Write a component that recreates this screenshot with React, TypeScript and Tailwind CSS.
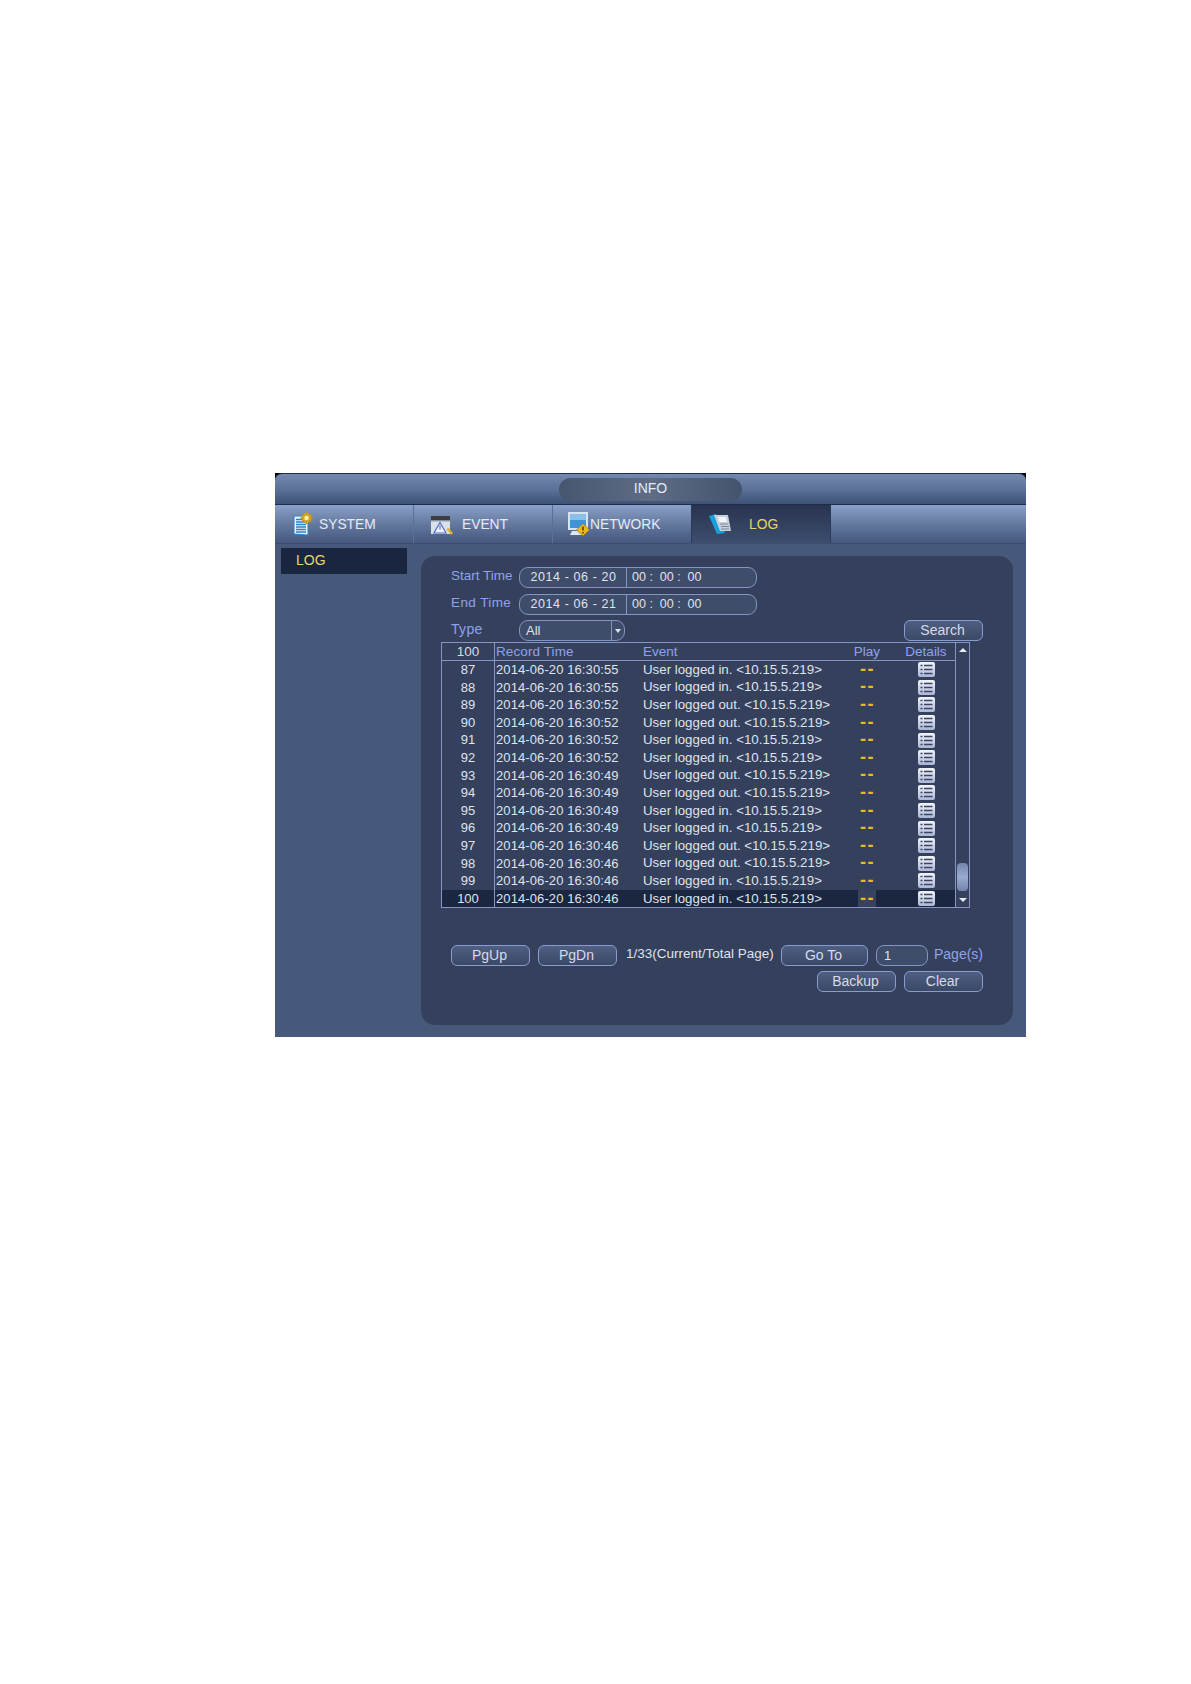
const rows = [
  { id: 87, time: '2014-06-20 16:30:55', event: 'User logged in. <10.15.5.219>' },
  { id: 88, time: '2014-06-20 16:30:55', event: 'User logged in. <10.15.5.219>' },
  { id: 89, time: '2014-06-20 16:30:52', event: 'User logged out. <10.15.5.219>' },
  { id: 90, time: '2014-06-20 16:30:52', event: 'User logged out. <10.15.5.219>' },
  { id: 91, time: '2014-06-20 16:30:52', event: 'User logged in. <10.15.5.219>' },
  { id: 92, time: '2014-06-20 16:30:52', event: 'User logged in. <10.15.5.219>' },
  { id: 93, time: '2014-06-20 16:30:49', event: 'User logged out. <10.15.5.219>' },
  { id: 94, time: '2014-06-20 16:30:49', event: 'User logged out. <10.15.5.219>' },
  { id: 95, time: '2014-06-20 16:30:49', event: 'User logged in. <10.15.5.219>' },
  { id: 96, time: '2014-06-20 16:30:49', event: 'User logged in. <10.15.5.219>' },
  { id: 97, time: '2014-06-20 16:30:46', event: 'User logged out. <10.15.5.219>' },
  { id: 98, time: '2014-06-20 16:30:46', event: 'User logged out. <10.15.5.219>' },
  { id: 99, time: '2014-06-20 16:30:46', event: 'User logged in. <10.15.5.219>' },
  { id: 100, time: '2014-06-20 16:30:46', event: 'User logged in. <10.15.5.219>' },
];

function SystemIcon() {
  return (
    <svg width="20" height="24" viewBox="0 0 20 24" className="shrink-0">
      <path d="M1 4h14v19l-14-1z" fill="#eaf3fc" stroke="#2f7fc4" strokeWidth="1" />
      <path d="M3 7.500h10M3 10h10M3 12.500h10M3 15h10M3 17.500h10M3 20h10" stroke="#2f80c8" strokeWidth="1.300" />
      <circle cx="13.500" cy="6" r="5" fill="#d9a81f" />
      <circle cx="13.500" cy="6" r="2.200" fill="#f9f0b5" />
      <path d="M13.500 0v2.400M13.500 9.600V12M7.500 6h2.400M17.100 6H20M9.500 2l1.600 1.600M15.900 8.400l1.600 1.600M9.500 10l1.600-1.600M15.900 3.600l1.600-1.600" stroke="#c1921a" strokeWidth="1.500" />
    </svg>
  );
}

function EventIcon() {
  return (
    <svg width="22" height="21" viewBox="0 0 22 21" className="shrink-0">
      <path d="M0 2h19v18H0z" fill="#d9dfeb" />
      <path d="M0 2h19v4H0z" fill="#3a3d44" />
      <path d="M0 6h19v1.400H0z" fill="#8a8f99" />
      <path d="M9 8.500 15 19H3z" fill="#eef2fa" stroke="#4c6fbd" strokeWidth="1.200" />
      <path d="M9 11.500v4" stroke="#4c6fbd" strokeWidth="1.200" />
      <path d="m16.500 14.500 4.500 5.500" stroke="#e0b32c" strokeWidth="2.600" />
    </svg>
  );
}

function NetworkIcon() {
  return (
    <svg width="22" height="24" viewBox="0 0 22 24" className="shrink-0">
      <path d="M0 0h20v18H0z" fill="#d5e3f2" />
      <path d="M2 2h16v14H2z" fill="#3a96d8" />
      <path d="M2 2h16v6H2z" fill="#89c0e6" />
      <path d="M4 19h10l2 4H2z" fill="#dfe6ef" />
      <path d="M15 11.500 21.500 18 15 24l-6.500-6z" fill="#f0b915" stroke="#7c6a1c" strokeWidth=".6" />
      <path d="M15 14.500v4M15 20v1.600" stroke="#3a2f0c" strokeWidth="1.400" />
    </svg>
  );
}

function LogIcon() {
  return (
    <svg width="24" height="20" viewBox="0 0 24 20" className="shrink-0">
      <path d="M0 2 7 0l9 19-8 1z" fill="#19a0dc" />
      <path d="M5 1h14l3 16H11z" fill="#c8d0da" />
      <path d="M9 3h8l1 5H10z" fill="#f1f4f8" />
      <path d="M11 10h8M12 12.500h8M12 15h8" stroke="#7a8698" strokeWidth="1" />
    </svg>
  );
}

function DetailsIcon() {
  return (
    <svg width="17" height="15" viewBox="0 0 17 15" className="shrink-0">
      <defs>
        <linearGradient id="detailsFill" x1="0" y1="0" x2="0" y2="1">
          <stop offset="0" stopColor="#f3f5fa" />
          <stop offset="1" stopColor="#aab6d6" />
        </linearGradient>
      </defs>
      <rect x="0" y="0" width="17" height="15" rx="2" fill="url(#detailsFill)" />
      <path d="M2.500 3.500h2M6 3.500h8.500M2.500 7.500h2M6 7.500h8.500M2.500 11.500h2M6 11.500h8.500" stroke="#3a4560" strokeWidth="1.500" />
    </svg>
  );
}

function Tab({ icon, label, active, className }: { icon: React.ReactNode; label: string; active?: boolean; className: string }) {
  return (
    <div className={`flex h-full w-[139px] items-center ${active ? 'bg-gradient-to-b from-[#28344f] to-[#3e4e6e] text-[#e9d46a]' : 'text-[#e6eaf4]'} ${className}`}>
      {icon}
      <span className="pt-[3px]">{label}</span>
    </div>
  );
}

function Btn({ label, className }: { label: string; className: string }) {
  return (
    <div className={`flex h-[21px] w-[79px] shrink-0 items-center justify-center rounded-[6px] border border-[#8a9bd0] bg-gradient-to-b from-[#4f5f82] to-[#3b4966] pr-[2px] text-[14px] text-[#d5dbe9] ${className}`}>
      {label}
    </div>
  );
}

function TimeField({ date }: { date: string }) {
  return (
    <div className="flex h-[21px] w-[238px] items-center rounded-[9px] border border-[#8494c4] bg-[#3f4d6a] text-[12.500px] text-[#dfe3ee]">
      <span className="w-[107px] border-r border-[#8494c4] pl-px text-center leading-[19px] tracking-[0.6px]">{date}</span>
      <span className="whitespace-pre pl-[5px]">00 :  00 :  00</span>
    </div>
  );
}

export default function App() {
  return (
    <div className="min-h-[1684px] bg-white pl-[275px] pt-[473px] font-['Liberation_Sans',Arial,sans-serif]">
      <div className="h-[564px] w-[751px] overflow-hidden bg-black">
        {/* Title bar */}
        <div className="flex h-[32px] items-center justify-center rounded-t-[7px] border-y border-[#1e2d4a] bg-gradient-to-b from-[#7389b0] via-[#5d7299] to-[#3e5278]">
          <div className="flex h-[23px] w-[183px] items-center justify-center rounded-full bg-gradient-to-r from-[#47566f] via-[#5f6c84] to-[#44536d] pb-px text-[14px] text-[#e6eaf4]">
            INFO
          </div>
        </div>

        {/* Tabs */}
        <div className="flex h-[39px] items-center border-b border-[#3c4e70] bg-gradient-to-b from-[#8aa0c8] via-[#65799f] to-[#445880] text-[13.800px]">
          <Tab icon={<SystemIcon />} label="SYSTEM" className="gap-[6px] pl-[18px] border-r border-[#5d7096]" />
          <Tab icon={<EventIcon />} label="EVENT" className="gap-[9px] pl-[17px] border-r border-[#5d7096]" />
          <Tab icon={<NetworkIcon />} label="NETWORK" className="pl-[15px] border-r border-[#2a3a58]" />
          <Tab icon={<LogIcon />} label="LOG" active className="w-[137px] gap-[16px] pl-[17px] border-r border-[#2a3a58]" />
        </div>

        {/* Body */}
        <div className="flex h-[493px] bg-[#47597b]">
          <div className="w-[146px] shrink-0 pl-[6px] pt-[4px]">
            <div className="flex h-[26px] w-[126px] items-center bg-[#1a263f] pb-[2px] pl-[15px] text-[14px] text-[#e9d46a]">LOG</div>
          </div>

          <div className="mt-[12px] h-[469px] w-[592px] rounded-[14px] bg-[#35415c] px-[30px] pt-[11px]">
            <div className="flex h-[21px] items-center">
              <span className="mb-[2px] w-[68px] text-[13.500px] text-[#8fa1ec]">Start Time</span>
              <TimeField date="2014 - 06 - 20" />
            </div>
            <div className="mt-[6px] flex h-[21px] items-center">
              <span className="mb-[2px] w-[68px] text-[13.500px] tracking-[0.4px] text-[#8fa1ec]">End Time</span>
              <TimeField date="2014 - 06 - 21" />
            </div>
            <div className="mt-[5px] flex h-[21px] items-center">
              <span className="mb-[2px] w-[68px] text-[14px] tracking-[0.3px] text-[#8fa1ec]">Type</span>
              <div className="flex h-[21px] w-[106px] items-center rounded-[9px] border border-[#8494c4] bg-[#3f4d6a] text-[13px] text-[#dfe3ee]">
                <span className="flex-1 pl-[6px]">All</span>
                <span className="flex h-full w-[13px] items-center justify-center border-l border-[#8494c4]">
                  <span className="h-0 w-0 border-x-[3.500px] border-t-[4px] border-x-transparent border-t-[#dfe3ee]" />
                </span>
              </div>
              <Btn label="Search" className="ml-auto" />
            </div>

            {/* Log table */}
            <div className="-ml-[10px] mt-px flex h-[266px] w-[529px] border border-[#8494c4] text-[13px]">
              <div className="w-[513px] shrink-0">
                <div className="flex h-[18px] items-center border-b border-[#8494c4] text-[13.500px] text-[#8fa1ec]">
                  <span className="h-full w-[53px] border-r border-[#8494c4] text-center leading-[17px] text-[#d5dbe9]">100</span>
                  <span className="w-[148px] pl-px pt-px tracking-[0.1px]">Record Time</span>
                  <span className="w-[202px] pt-px">Event</span>
                  <span className="w-[44px] pt-px text-center">Play</span>
                  <span className="ml-[8px] w-[58px] pt-px text-center">Details</span>
                </div>
                {rows.map(r => (
                  <div key={r.id} className={`flex h-[17.600px] items-center text-[#dfe3ee] ${r.id === 100 ? 'bg-[#1b2740]' : ''}`}>
                    <span className="h-full w-[53px] border-r border-[#8494c4] text-center leading-[17px]">{r.id}</span>
                    <span className="w-[148px] pl-px tracking-[0.1px]">{r.time}</span>
                    <span className="w-[202px] whitespace-nowrap text-[13.300px]">{r.event}</span>
                    <span className="flex h-full w-[44px] items-center justify-center">
                      <span className={`flex h-full w-[18px] items-center justify-center whitespace-nowrap pb-[2px] pl-px text-[18px] font-bold leading-none tracking-[1.500px] text-[#e8bc1c] ${r.id === 100 ? 'bg-[#35435f]' : ''}`}>--</span>
                    </span>
                    <span className="ml-[8px] flex w-[58px] justify-center"><DetailsIcon /></span>
                  </div>
                ))}
              </div>
              <div className="flex flex-1 flex-col items-center border-l border-[#8494c4] py-[5px]">
                <span className="h-0 w-0 border-x-[4px] border-b-[4px] border-x-transparent border-b-[#e6eaf4]" />
                <div className="mt-auto h-[28px] w-[11px] rounded-[4px] bg-gradient-to-b from-[#7385ae] via-[#9aabd0] to-[#7385ae]" />
                <span className="mt-[7px] h-0 w-0 border-x-[4px] border-t-[4px] border-x-transparent border-t-[#e6eaf4]" />
              </div>
            </div>

            {/* Paging */}
            <div className="mt-[37px] flex h-[21px] items-center">
              <Btn label="PgUp" className="" />
              <Btn label="PgDn" className="ml-[8px]" />
              <span className="mb-[3px] ml-[9px] w-[155px] whitespace-nowrap text-[13.500px] text-[#dfe3ee]">1/33(Current/Total Page)</span>
              <Btn label="Go To" className="w-[87px]" />
              <div className="ml-[8px] flex h-[21px] w-[52px] items-center rounded-[8px] border border-[#8494c4] bg-[#3f4d6a] pl-[7px] text-[13px] text-[#dfe3ee]">1</div>
              <span className="mb-[3px] ml-auto text-[14px] text-[#8fa1ec]">Page(s)</span>
            </div>
            <div className="mt-[5px] flex justify-end gap-[8px]">
              <Btn label="Backup" className="" />
              <Btn label="Clear" className="" />
            </div>
          </div>
        </div>
      </div>
    </div>
  );
}
